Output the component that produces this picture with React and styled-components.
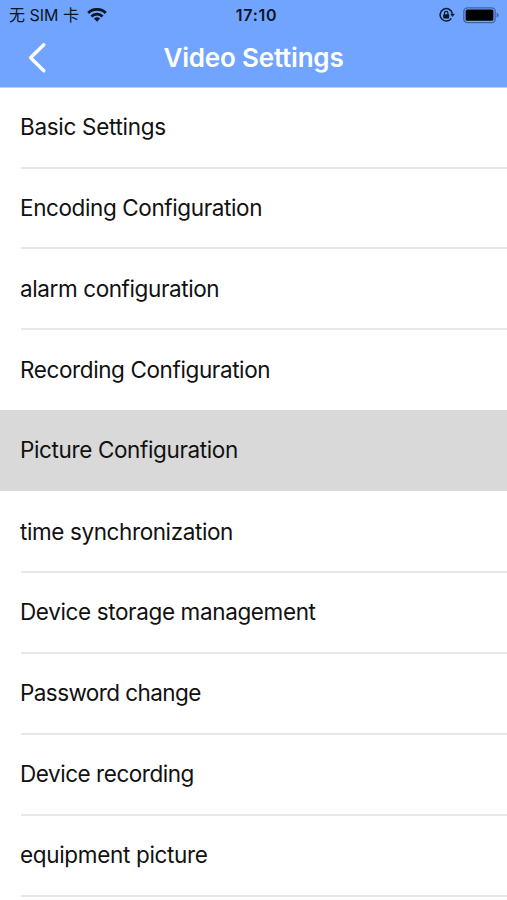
import React from 'react'
import styled, { createGlobalStyle } from 'styled-components'

const items = [
    { label: 'Basic Settings', tracking: -.3 },
    { label: 'Encoding Configuration', tracking: -.39 },
    { label: 'alarm configuration', tracking: -.4 },
    { label: 'Recording Configuration', tracking: -.39, noLine: true },
    { label: 'Picture Configuration', tracking: -.37, active: true },
    { label: 'time synchronization', tracking: -.4 },
    { label: 'Device storage management', tracking: -.37 },
    { label: 'Password change', tracking: -.58 },
    { label: 'Device recording', tracking: -.46 },
    { label: 'equipment picture', tracking: -.33 },
]

function StatusBar() {
    return (
        <StatusWrapper>
            <Carrier>
                <span>无 SIM 卡</span>
                <svg width='20' height='14' viewBox='0 0 20 14'>
                    <g fill='none' stroke='#0b1524' strokeWidth='2.7'>
                        <path d='M1.2 5 A12.4 12.4 0 0 1 18.8 5' />
                        <path d='M4.4 8.5 A7.9 7.9 0 0 1 15.6 8.5' />
                    </g>
                    <path d='M10 13.8 L6.9 10.6 A4.4 4.4 0 0 1 13.1 10.6 Z' fill='#0b1524' />
                </svg>
            </Carrier>
            <Clock>17:10</Clock>
            <Indicators>
                <svg width='16' height='16' viewBox='0 0 16 16'>
                    <path d='M12.4 11.4 A6.2 6.2 0 1 1 13.4 6.6' fill='none' stroke='#0b1e3c' strokeWidth='1.5' />
                    <path d='M11.1 6.7 H15.9 L13.5 10.1 Z' fill='#0b1e3c' />
                    <rect x='4.2' y='7.2' width='6' height='4.2' rx='.5' fill='#0b1524' />
                    <path d='M5.5 7.4 V6 A1.7 1.7 0 0 1 8.9 6 V7.4' fill='none' stroke='#0b1524' strokeWidth='1.2' />
                </svg>
                <svg width='36' height='17' viewBox='0 0 36 17'>
                    <rect x='.8' y='.8' width='31.4' height='14.8' rx='3.6' fill='none' stroke='#42669f' strokeWidth='1.3' />
                    <rect x='2.6' y='2.6' width='27.8' height='11.2' rx='1.6' fill='#000' />
                    <path d='M33.6 5.6 Q35.6 6.4 35.6 8.2 Q35.6 10 33.6 10.8 Z' fill='#42669f' />
                </svg>
            </Indicators>
        </StatusWrapper>
    )
}

function App() {
    return (
        <Screen>
            <GlobalStyle />
            <Header>
                <StatusBar />
                <NavBar>
                    <BackButton aria-label='Back'>
                        <svg width='20' height='32' viewBox='0 0 20 32'>
                            <path d='M16.8 2.7 L3.6 15.7 L16.8 28.7' fill='none' stroke='#fff' strokeWidth='3.4' strokeLinecap='round' strokeLinejoin='round' />
                        </svg>
                    </BackButton>
                    <Title>Video Settings</Title>
                </NavBar>
            </Header>
            <List>
                {items.map(item => (
                    <Row key={item.label} $active={item.active}>
                        <RowContent $noLine={item.active || item.noLine} $tracking={item.tracking}>
                            {item.label}
                        </RowContent>
                    </Row>
                ))}
            </List>
        </Screen>
    )
}

const GlobalStyle = createGlobalStyle`
* {
  box-sizing: border-box;
}

body {
  margin: 0;
  overflow: hidden;
  background: #fff;
  font-family: Inter, "Noto Sans CJK SC", sans-serif;
}
`

const Screen = styled.div`
  width: 100%;
  height: 900px;
  overflow: hidden;
  background: #fff;
`

const Header = styled.header`
  height: 88px;
  background: #70a4ff;
  border-bottom: 1px solid #b9d1fc;
`

const StatusWrapper = styled.div`
  display: grid;
  grid-template-columns: 1fr auto 1fr;
  align-items: center;
  height: 30px;
  padding: 0 8px 0 9px;
  color: #0b1524;
`

const Carrier = styled.div`
  display: flex;
  align-items: center;
  gap: 8px;
  font-size: 16px;
  line-height: 30px;
  white-space: nowrap;
`

const Clock = styled.span`
  padding-left: 5px;
  font-size: 16px;
  font-weight: 600;
  line-height: 30px;
  letter-spacing: .7px;
`

const Indicators = styled.div`
  display: flex;
  align-items: center;
  justify-content: flex-end;
  gap: 8px;
`

const NavBar = styled.nav`
  display: grid;
  grid-template-columns: 60px 1fr 60px;
  align-items: center;
  height: 56px;
`

const BackButton = styled.button`
  display: flex;
  padding: 0 0 1px 27px;
  border: 0;
  background: none;
`

const Title = styled.h1`
  margin: 0;
  color: #fff;
  font-size: 26px;
  font-weight: 600;
  line-height: 56px;
  letter-spacing: -.2px;
  text-align: center;
`

const List = styled.ul`
  margin: 0;
  padding: 0;
  list-style: none;
`

const Row = styled.li`
  height: 80.9px;
  margin: ${p => p.$active ? '-1px 0 1px' : '0'};
  padding-left: 21px;
  background: ${p => p.$active ? '#d9d9d9' : '#fff'};

  &:first-child {
    height: 80.6px;
  }
`

const RowContent = styled.div`
  display: flex;
  align-items: center;
  height: 100%;
  padding-bottom: 1px;
  border-bottom: 2px solid ${p => p.$noLine ? 'transparent' : '#e7e7e7'};
  color: #111;
  font-size: 22.5px;
  letter-spacing: ${p => p.$tracking}px;
  text-indent: -1px;
`

export default App
